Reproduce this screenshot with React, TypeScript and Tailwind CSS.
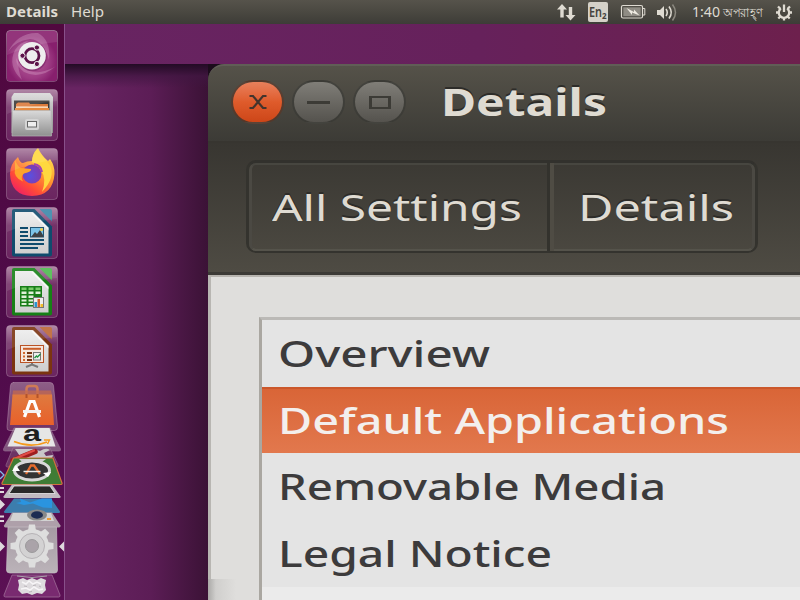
import { useLayoutEffect, useRef, useState, type ReactNode } from "react";

/* Stretches its text horizontally so that it fills the width of its box. */
function FitText({ className, children }: { className: string; children: ReactNode }) {
  const box = useRef<HTMLDivElement>(null);
  const text = useRef<HTMLSpanElement>(null);
  const [scale, setScale] = useState(1);
  useLayoutEffect(() => {
    if (box.current && text.current) {
      setScale(box.current.offsetWidth / text.current.getBoundingClientRect().width);
    }
  }, []);
  return (
    <div ref={box} className={`shrink-0 whitespace-nowrap ${className}`}>
      <span ref={text} className="inline-block origin-left" style={{ transform: `scaleX(${scale})` }}>
        {children}
      </span>
    </div>
  );
}

function TopBar() {
  return (
    <header className="relative z-20 flex h-6 items-center bg-linear-to-b from-[#56534b] via-[#4a4841] to-[#3d3c37] text-[14px] leading-6 text-[#dfdbd2]">
      <FitText className="ml-[6px] w-[52px] font-bold">Details</FitText>
      <FitText className="ml-[13px] w-[33px]">Help</FitText>
      <svg className="ml-auto h-6 w-5 shrink-0" viewBox="556 0 20 24" fill="#dfdbd2">
        <path d="M562 4l5 5.500h-3.300v8h-3.400v-8h-3.300zM570.500 20.500l-5-5.500h3.300v-8h3.400v8h3.300z" />
      </svg>
      <div className="ml-3 flex h-5 w-5 shrink-0 items-center rounded-[2px] bg-[#d5d1c8] pl-px text-[#45433d]">
        <FitText className="w-[13px] text-[14px] font-semibold leading-5">En</FitText>
        <span className="mt-2 text-[8px] font-bold leading-3">2</span>
      </div>
      <svg className="ml-3 h-6 w-[26px] shrink-0" viewBox="620 0 26 24">
        <rect x="621.500" y="5.500" width="21" height="12.500" rx="1.500" fill="none" stroke="#dfdbd2" strokeWidth="1.200" />
        <rect x="623.300" y="7.300" width="17.400" height="9" fill="#8f8c84" />
        <path d="M643 8.500h1.800v6.500h-1.800" fill="none" stroke="#dfdbd2" />
        <path d="M626.500 8l7.500 4v-2.500l5.500 6-7.500-3v2.500z" fill="#f0ece3" />
      </svg>
      <svg className="ml-2.5 h-6 w-[22px] shrink-0" viewBox="656 0 22 24" fill="none" stroke="#dfdbd2">
        <path d="M657 10h3l4-4v13l-4-4h-3z" fill="#dfdbd2" stroke="none" />
        <path d="M666 9q2.500 3.500 0 7" strokeWidth="1.600" />
        <path d="M669 6.500q4.500 6 0 12" strokeWidth="1.600" />
        <path d="M672.500 4.500q6 8 0 16" strokeWidth="1.500" stroke="#8b887f" />
      </svg>
      <div className="ml-3.5 flex shrink-0 gap-[3px]">
        <FitText className="w-[28px]">1:40</FitText>
        <FitText className="w-[40px] text-[13px]">{"অপরাহ্\u200cণ"}</FitText>
      </div>
      <svg className="mr-[7px] ml-3 h-6 w-[18px] shrink-0" viewBox="775 0 18 24" fill="none" stroke="#dfdbd2">
        <path d="M780.800 8.500a5.200 5.200 0 1 0 6.400 0" strokeWidth="2.300" />
        <path d="M784 4.500v7.500M778 6.500l2.500 2.500M790 6.500l-2.500 2.500M776 12.500h3M792 12.500h-3M778.300 18.500l2-2M789.700 18.500l-2-2M784 20.500v-3" strokeWidth="2.300" />
      </svg>
    </header>
  );
}

function Tile({ y, children }: { y: number; children: ReactNode }) {
  return (
    <svg className="h-[52px] w-[52px] shrink-0" viewBox={`6 ${y} 52 52`}>
      <rect x="6.500" y={y + 0.5} width="51" height="51" rx="3.500" fill="url(#tile)" stroke="#fff" strokeOpacity=".22" />
      {children}
      <path d={`M7 ${y + 4}q0-3 3-3h44q3 0 3 3v8q-25 2-50 13z`} fill="#fff" opacity=".1" />
    </svg>
  );
}

function Gradients() {
  return (
    <svg className="absolute h-0 w-0">
      <defs>
        <linearGradient id="tile" x2="0" y2="1">
          <stop stopColor="#a87a9d" />
          <stop offset=".35" stopColor="#743268" />
          <stop offset="1" stopColor="#6b2560" />
        </linearGradient>
        <radialGradient id="dash" cy=".6">
          <stop stopColor="#b8609c" />
          <stop offset=".7" stopColor="#9c3a82" />
          <stop offset="1" stopColor="#871f6d" />
        </radialGradient>
        <linearGradient id="metal" x2="0" y2="1">
          <stop stopColor="#dadada" />
          <stop offset="1" stopColor="#8f8f8f" />
        </linearGradient>
        <linearGradient id="paper" x2="0" y2="1">
          <stop stopColor="#ececec" />
          <stop offset="1" stopColor="#cfcfcf" />
        </linearGradient>
        <linearGradient id="fox" x1=".9" x2=".2" y2="1">
          <stop stopColor="#fff05a" />
          <stop offset=".4" stopColor="#ffa52e" />
          <stop offset=".75" stopColor="#ff4a38" />
          <stop offset="1" stopColor="#ee1c68" />
        </linearGradient>
        <radialGradient id="globe" cx=".4" cy=".6">
          <stop stopColor="#5a50e0" />
          <stop offset="1" stopColor="#7b3fb5" />
        </radialGradient>
        <linearGradient id="bag" x2="0" y2="1">
          <stop stopColor="#df7a3f" />
          <stop offset="1" stopColor="#e8602a" />
        </linearGradient>
        <linearGradient id="glass" x2="0" y2="1">
          <stop stopColor="#8e5f87" />
          <stop offset="1" stopColor="#6f3266" />
        </linearGradient>
        <linearGradient id="gearTile" x2="0" y2="1">
          <stop stopColor="#a59aa3" />
          <stop offset="1" stopColor="#bbb3b9" />
        </linearGradient>
      </defs>
    </svg>
  );
}

/* Page with a folded corner, shared by the three office programs. */
function OfficePage({ y, color, corner }: { y: number; color: string; corner: string }) {
  return (
    <g transform={`translate(0 ${y})`}>
      <path d="M14 2h20.500L52 19.500v28q0 2-2 2H14q-2 0-2-2V4q0-2 2-2z" fill={color} />
      <path d="M15 5h17.500l16 16V46.500H15z" fill="url(#paper)" />
      <path d="M33 5l15.500 15.500v3L31.500 6.500z" fill="#fff" opacity=".7" />
      <path d="M39.500 2h10.500q2 0 2 2v10.500z" fill={corner} />
    </g>
  );
}

function FoldedStack() {
  return (
    <svg className="h-[218px] w-16 shrink-0" viewBox="0 382 64 218">
      {/* software centre */}
      <path d="M13 382.500h37q3 0 3.500 3l4 41q.3 4-3 4H9.500q-3 0-2.500-4l3.500-41q.4-3 3-3z" fill="url(#glass)" stroke="#b793b1" strokeOpacity=".5" />
      <path d="M26.500 397v-8q0-3 3-3h5q3 0 3 3v8" fill="none" stroke="#cf7a55" strokeWidth="2.500" />
      <path d="M13 390.500h38l1 5H12.500z" fill="#c46a4d" opacity=".75" />
      <path d="M12.500 394.500h39.500l2 30.500H10z" fill="url(#bag)" />
      <path d="M26.500 394v4M37.500 394v4" stroke="#b4532a" strokeWidth="2" />
      <path d="M24.500 417l5.500-15.500h4L39.500 417" stroke="#fff" strokeWidth="3.200" fill="none" />
      <path d="M23 411.500h18" stroke="#f4f1f1" strokeWidth="3" />

      {/* shop */}
      <path d="M14 428h36l10.500 21q.5 2-1.500 2H5q-2 0-1.500-2z" fill="#a28a9f" opacity=".6" stroke="#bfa7bb" strokeWidth=".7" />
      <path d="M15.500 428h34l6 18.500H7.500z" fill="#e6e6e6" />
      <text x="23" y="441" fontSize="22" fontWeight="700" textLength="18" lengthAdjust="spacingAndGlyphs" fill="#1e1e1e" fontFamily="Liberation Sans, sans-serif">a</text>
      <path d="M14 441.500q17 7 33 .5" fill="none" stroke="#f59a1c" strokeWidth="1.800" />
      <path d="M44 440h5.500l-2 4" fill="none" stroke="#f59a1c" strokeWidth="1.400" />

      {/* settings wrench */}
      <path d="M13 448h37l8 17q.5 2-1.500 2h-49q-2 0-1.500-2z" fill="#77456f" opacity=".7" stroke="#a17e9b" strokeWidth=".8" />
      <path d="M15 449h19l6 2q6-4 10-1l-6 3 2 3 7-1q0 5-8 5l8 5H32l-8-3z" fill="#c9c6c9" />
      <path d="M13 460.500l22-9" stroke="#9f1d20" strokeWidth="5.500" strokeLinecap="round" />
      <path d="M14 459l20-8.500" stroke="#e04d47" strokeWidth="2.300" strokeLinecap="round" />

      {/* updater */}
      <path d="M13.500 458h39.500l9 25q.5 1.500-1.500 1.500h-57q-2 0-1.500-1.500z" fill="#3f7c35" stroke="#d2723d" strokeWidth="1.200" />
      <path d="M19 459h27l-4 3H22z" fill="#d0cdd0" />
      <ellipse cx="32" cy="470.500" rx="17.500" ry="9.500" fill="#343434" stroke="#d8d8d8" strokeWidth="3" />
      <path d="M12 471h8l-4-6zM51 472l-8 1 5 4z" fill="#fff" />
      <path d="M26 474l5-8.500h3l6 8.500" stroke="#e66b2c" strokeWidth="2.300" fill="none" />
      <path d="M23.500 471.500h17" stroke="#eee" strokeWidth="1.500" />

      {/* terminal screen */}
      <path d="M12 484.500h40l8.500 12q.5 1.500-1.500 1.500H5q-2 0-1.500-1.500z" fill="#c1bac0" />
      <path d="M14 486h36l5 7.500H9z" fill="#292929" stroke="#eee" strokeWidth=".8" />

      {/* code editor */}
      <path d="M14 498.500h37l9 13q.5 1.500-1.500 1.500h-53q-2 0-1.500-1.500z" fill="#3c7dad" />
      <path d="M20 498.500l10 4 12-4h10v9.500l-9-.5-10-4-9 1.500-8-2 5-1z" fill="#2a94e0" />

      {/* camera */}
      <path d="M12 512.500h40l8.500 13q.5 2-1.500 2H5.500q-2 0-1.500-2z" fill="#aea0aa" />
      <path d="M13 513h38l3 8H10z" fill="#d2d2d2" />
      <ellipse cx="37" cy="515" rx="10" ry="5.500" fill="#888" />
      <ellipse cx="37" cy="515" rx="6" ry="3.700" fill="#1c2b52" />
      <path d="M47 518h4v2h-4z" fill="#ed9a35" />

      {/* system settings, running */}
      <path d="M8 527h48.500l1 43q0 3-3 3H10q-3.500 0-3.500-3z" fill="url(#gearTile)" stroke="#c6bdc4" strokeWidth=".7" />
      <g fill="#dedede">
        <circle cx="32" cy="546" r="17" />
        {[0, 45, 90, 135, 180, 225, 270, 315].map((a) => (
          <path key={a} d="M28 531l1-6.500h6l1 6.500z" transform={`rotate(${a} 32 546)`} />
        ))}
      </g>
      <circle cx="32" cy="546" r="12.500" fill="#d3d2d3" stroke="#b6b3b6" />
      <circle cx="32" cy="546" r="6.500" fill="#aaa3a9" stroke="#9b999b" />

      {/* waste bin */}
      <path d="M12 575h40l8 20q.5 2-1.500 2H5.500q-2 0-1.500-2z" fill="#792a70" stroke="#9f6c98" strokeWidth=".8" />
      <path d="M17 576q15 3 30 0" fill="none" stroke="#aaa5aa" />
      <path d="M18 580l5-2 4 2 5-2 5 2 4-2 5 2-1 5 1 5-4 4-5-1-5 2-5-2-5 1-4-4 1-5z" fill="#dedbde" />
      <path d="M22 582l4 2 3-3 4 3 4-2 4 2M21 589l5-1 4 2 4-3 5 3 4-1" stroke="#f7f5f7" strokeWidth="1.500" fill="none" />
      <path d="M24 586l3 .5M33 585.500l3-.5M39 586l2 1M29 592l3-.5" stroke="#bab5ba" />

      <g fill="#ded8dc">
        <path d="M0 541.500l5 5-5 5zM64 541.500l-5 5 5 5zM0 499.500l5 5-5 5zM0 487h4v2H0zM0 491h4v2H0zM0 515.500h4v2H0zM0 520h4v2H0z" />
      </g>
      <path d="M0 471l4 4-4 4" fill="none" stroke="#82bce8" strokeWidth="1.300" />
    </svg>
  );
}

function Launcher() {
  return (
    <nav className="relative z-10 flex h-[576px] w-[65px] flex-col border-r border-[#88508a] bg-linear-to-b from-[#51083f] via-[#4e0b49] to-[#5b1054]">
      <div className="flex flex-col items-start gap-[7px] pt-1.5 pl-1.5">
        <Tile y={30}>
          <rect x="7" y="31" width="50" height="50" rx="3" fill="url(#dash)" />
          <path d="M8 52Q18 32 38 33Q51 40 49 60Q44 40 30 39Q15 41 8 52z" fill="#e3b5d6" opacity=".3" />
          <path d="M22 80Q7 66 15 50Q20 42 28 41Q12 56 22 80z" fill="#e3b5d6" opacity=".3" />
          <path d="M56 66Q40 80 24 72Q16 66 16 58Q24 74 40 72Q50 70 56 66z" fill="#e3b5d6" opacity=".3" />
          <circle cx="32.500" cy="56.800" r="14.300" fill="#611052" opacity=".4" />
          <circle cx="32" cy="55.700" r="13.800" fill="#eeedee" />
          <circle cx="32" cy="55.700" r="7" fill="none" stroke="#5c1249" strokeWidth="2.800" />
          <g stroke="#eeedee" strokeWidth="1" fill="#5c1249">
            <circle cx="22.500" cy="55.700" r="2.600" />
            <circle cx="36.900" cy="47.500" r="2.600" />
            <circle cx="36.900" cy="64" r="2.600" />
          </g>
        </Tile>
        <Tile y={89}>
          <path d="M14 93h36l3 4v36H11.500V97z" fill="url(#metal)" />
          <path d="M14 100.500h35.500V112H14z" fill="#3b3937" />
          <path d="M16 104l2-1.500h11l1 1.500h18v7H16z" fill="#dc7b3b" />
          <path d="M16 106.500h32v1.300H16z" fill="#fff1d8" />
          <path d="M15 108h34v4H15z" fill="#e8893c" />
          <path d="M12.500 110.500h38.500l.5 25.500H12z" fill="url(#metal)" stroke="#b6b6b6" strokeWidth=".7" />
          <rect x="25" y="119" width="14" height="11" rx="2" fill="#d4d4d4" />
          <rect x="27.500" y="121.500" width="9" height="5.500" fill="#eee" stroke="#666" />
        </Tile>
        <Tile y={148}>
          <path d="M18 157q2 6 5 6 4-2 9-2 1-7 6-13 3 7 10 13l2-2q5 7 4.500 15Q53 195.500 32 196 11 195.500 10 174q0-10 8-17z" fill="url(#fox)" />
          <path d="M32 162q0-8 5-13 6 8 13 16 6 12-8 27 5-13-1-22-3-6-9-8z" fill="#ffd83f" />
          <circle cx="32" cy="174" r="9.500" fill="url(#globe)" />
          <path d="M15 160q3 7 6 8l10 1q1 2.500-7 4.500-4 3-1 8-10-4-8-13z" fill="#ffa42b" />
          <path d="M34 164q7 1 8 8" fill="none" stroke="#a642b0" strokeWidth="2" />
        </Tile>
        <Tile y={207}>
          <OfficePage y={207} color="#0f4b6d" corner="#3a87a9" />
          <path d="M20 228h8M20 232h8M20 236h8M20 240h24M20 244h24M20 248h18" stroke="#0f4b6d" strokeWidth="2" />
          <rect x="30.500" y="227.500" width="13" height="9.500" fill="#7cc4e8" stroke="#225675" />
          <path d="M31 237l4-5 2 2 3-4 3 5v2z" fill="#3e4145" />
          <circle cx="41.500" cy="229.500" r="1.500" fill="#f4cf45" />
        </Tile>
        <Tile y={266}>
          <OfficePage y={266} color="#168016" corner="#4db94d" />
          <path d="M20 286h22v20.500H20z" fill="#177d17" />
          <path d="M21.500 287.500h5v2.500h-5zM28.500 287.500h5v2.500h-5zM35.500 287.500h5v2.500h-5z" fill="#79cb68" />
          <path d="M21.500 291.500h5v2.500h-5zM28.500 291.500h5v2.500h-5zM35.500 291.500h5v2.500h-5zM21.500 295.500h5v2.500h-5zM28.500 295.500h5v2.500h-5zM21.500 299.500h5v2h-5zM28.500 299.500h5v2h-5zM21.500 303h5v2h-5zM28.500 303h5v2h-5z" fill="#dff0d8" />
          <rect x="33.500" y="297.500" width="10" height="10" fill="#eee" stroke="#777" />
          <path d="M34.500 302h2.500v5h-2.500z" fill="#2b95cf" />
          <path d="M37.500 299h2.500v8h-2.500z" fill="#d55e28" />
          <path d="M40.500 304h2.500v3h-2.500z" fill="#f2bc29" />
        </Tile>
        <Tile y={325}>
          <OfficePage y={325} color="#7b3410" corner="#bb6534" />
          <rect x="20.500" y="345.500" width="23" height="17" fill="#f5e8df" stroke="#ba5326" />
          <path d="M23 348.800h18" stroke="#c95d28" strokeWidth="2" />
          <path d="M23 353h2M23 356.500h2M23 360h2" stroke="#d1682c" strokeWidth="2" />
          <path d="M27 353h5M27 356.500h5M27 360h5" stroke="#783411" strokeWidth="2" />
          <rect x="33.500" y="352.500" width="7" height="7.500" fill="#eee" stroke="#777" />
          <path d="M34.500 358l2-2 1 1 3-3" stroke="#209340" strokeWidth="1.400" fill="none" />
          <path d="M32 363v2M26 367l6-2.500 6 2.500" stroke="#777" strokeWidth="2" fill="none" />
        </Tile>
      </div>
      <div className="mt-[5px] flex">
        <FoldedStack />
      </div>
    </nav>
  );
}

function TitleBar() {
  return (
    <div className="flex h-[77px] items-center rounded-tl-[16px] border-t-2 border-[#605e56] bg-linear-to-b from-[#555249] to-[#3c3b36] pb-[3px] pl-[23px]">
      <div className="flex gap-2">
        <div className="flex h-[44px] w-[53px] items-center justify-center rounded-full border-2 border-[#35342f]/80 bg-linear-to-b from-[#e9805b] via-[#df5b2b] to-[#cd4618]">
          <svg className="h-4 w-5" viewBox="0 0 20 16">
            <path d="M1.500 2H5l10 12h3.500M18.500 2H15L5 14H1.500" fill="none" stroke="#43342d" strokeWidth="2.200" />
          </svg>
        </div>
        <div className="flex h-[44px] w-[53px] items-center justify-center rounded-full border-2 border-[#35342f]/80 bg-linear-to-b from-[#807e78] to-[#55534e]">
          <div className="h-[3px] w-[23px] bg-[#3c3b36]" />
        </div>
        <div className="flex h-[44px] w-[53px] items-center justify-center rounded-full border-2 border-[#35342f]/80 bg-linear-to-b from-[#807e78] to-[#55534e]">
          <div className="h-[13px] w-[22px] border-x-[3px] border-y-2 border-[#3c3b36]" />
        </div>
      </div>
      <FitText className="ml-[35px] w-[166px] text-[37px] font-bold leading-[72px] text-[#dfdbd2] [text-shadow:0_-2px_0_#2d2c29]">
        Details
      </FitText>
    </div>
  );
}

function Breadcrumbs() {
  return (
    <div className="flex h-[134px] items-start border-t-2 border-b-[3px] border-t-[#373530] border-b-[#3c3a36] bg-linear-to-b from-[#383631] to-[#4e4b43] pt-[17px] pl-[38px]">
      <div className="flex h-[93px] w-[512px] rounded-[10px] border-x-[3px] border-t-[3px] border-b-2 border-x-[#34332e] border-t-[#32312d] border-b-[#34332e] text-[37px] leading-[83px] text-[#dfdbd2] [text-shadow:0_-2px_0_#2d2c29]">
        <div className="flex w-[298px] rounded-l-[7px] border-y-2 border-l-[3px] border-t-[#474640] border-b-[#55534b] border-l-[#4b4943] pl-5">
          <FitText className="w-[250px]">All Settings</FitText>
        </div>
        <div className="w-[3px] bg-[#33322d]" />
        <div className="w-1 bg-[#4f4c44]" />
        <div className="flex flex-1 rounded-r-[7px] border-y-2 border-r-[3px] border-t-[#474640] border-r-[#4b4943] border-b-[#55534b] pl-[24px]">
          <FitText className="w-[156px]">Details</FitText>
        </div>
      </div>
    </div>
  );
}

function SettingsList() {
  return (
    <div className="flex h-[283px] flex-1 flex-col border-t-[3px] border-l-[3px] border-t-[#bbb9b6] border-l-[#aaa7a1] bg-[#ebebeb] text-[37px] font-medium text-[#3c3b3c]">
      <div className="h-[67px] bg-[#e4e4e4] pl-4 leading-[65px]">
        <FitText className="w-[212px]">Overview</FitText>
      </div>
      <div className="h-[66px] border-t-2 border-[#cb572b] bg-linear-to-b from-[#d96537] to-[#e2784d] pl-4 leading-[61px] text-[#f3efed]">
        <FitText className="w-[451px]">Default Applications</FitText>
      </div>
      <div className="h-[67px] bg-[#e4e4e4] pl-4 leading-[65px]">
        <FitText className="w-[388px]">Removable Media</FitText>
      </div>
      <div className="h-[67px] bg-[#e4e4e4] pl-4 leading-[65px]">
        <FitText className="w-[274px]">Legal Notice</FitText>
      </div>
    </div>
  );
}

export default function App() {
  return (
    <div className="relative h-[600px] w-[800px] overflow-hidden bg-[#682462] font-['Noto_Sans',sans-serif]">
      <Gradients />
      <TopBar />
      <div className="relative flex h-[576px] bg-linear-to-r from-[#682462] from-[10%] via-[#66215b] via-[60%] to-[#6d204d]">
        <Launcher />
        <div className="mt-10 w-[143px] shrink-0 bg-linear-to-r from-[#682462] from-[15%] via-[#5c1d56] via-[60%] to-[#3b1236]">
          <div className="h-6 bg-linear-to-b from-[#230b25] via-[#401641]/70 to-transparent" />
        </div>
        <section className="absolute top-10 left-[208px] flex h-[536px] w-[592px] flex-col bg-[#1b0c1b]">
          <TitleBar />
          <Breadcrumbs />
          <div className="flex h-[325px] border-t-2 border-l-[3px] border-t-[#b7b4af] border-l-[#b8b6b2] bg-[#dfdedc] pt-10 pl-12">
            <SettingsList />
          </div>
          <div className="absolute bottom-0 left-0 h-[21px] w-7 bg-linear-to-r from-[#aaa9a7] via-[#d0cfcd] via-[28%] to-[#dfdedc]" />
        </section>
      </div>
    </div>
  );
}
